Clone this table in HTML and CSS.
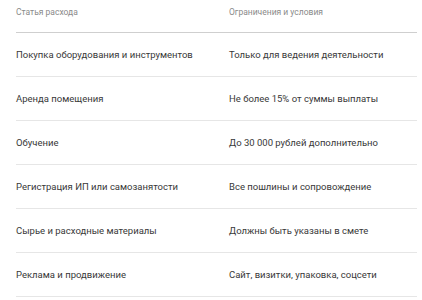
FILE: index.html
```html
<!DOCTYPE html>
<html lang="ru">
<head>
<meta charset="utf-8">
<link rel="stylesheet" href="styles.css">
</head>
<body>
<div class="table">
  <div class="row head">
    <div class="cell">Статья расхода</div>
    <div class="cell">Ограничения и условия</div>
  </div>
  <div class="row">
    <div class="cell">Покупка оборудования и инструментов</div>
    <div class="cell">Только для ведения деятельности</div>
  </div>
  <div class="row">
    <div class="cell">Аренда помещения</div>
    <div class="cell">Не более 15% от суммы выплаты</div>
  </div>
  <div class="row">
    <div class="cell">Обучение</div>
    <div class="cell">До 30 000 рублей дополнительно</div>
  </div>
  <div class="row">
    <div class="cell">Регистрация ИП или самозанятости</div>
    <div class="cell">Все пошлины и сопровождение</div>
  </div>
  <div class="row">
    <div class="cell">Сырье и расходные материалы</div>
    <div class="cell">Должны быть указаны в смете</div>
  </div>
  <div class="row">
    <div class="cell">Реклама и продвижение</div>
    <div class="cell">Сайт, визитки, упаковка, соцсети</div>
  </div>
</div>
</body>
</html>
```

FILE: styles.css
```css
html, body {
  margin: 0;
  padding: 0;
  background: #ffffff;
}
body {
  font-family: Roboto, "Liberation Sans", sans-serif;
  color: #383838;
}
.table {
  margin: 0 5px 0 16px;
}
.row {
  display: grid;
  grid-template-columns: 213px 1fr;
  align-items: center;
  height: 43px;
  border-bottom: 1px solid #e6e6e6;
  font-size: 9.5px;
}
.row.head {
  height: 32px;
  align-items: start;
  border-bottom: 1px solid #cfcfcf;
  font-size: 8.5px;
  color: #8a8a8a;
}
.row.head .cell {
  padding-top: 7px;
}
```
